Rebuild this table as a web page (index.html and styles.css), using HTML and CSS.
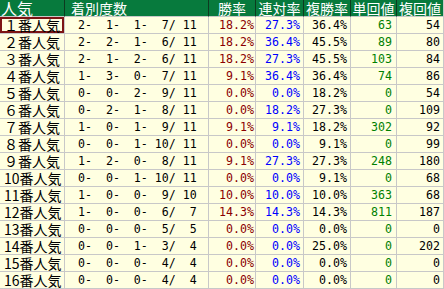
FILE: index.html
```html
<!DOCTYPE html>
<html lang="ja">
<head>
<meta charset="utf-8">
<link rel="stylesheet" href="styles.css">
</head>
<body>
<table class="stats">
  <colgroup>
    <col class="c-label"><col class="c-count"><col class="c-rate1"><col class="c-rate2"><col class="c-rate3"><col class="c-ret1"><col class="c-ret2">
  </colgroup>
  <thead>
    <tr>
      <th class="h-label">人気</th>
      <th class="h-count">着別度数</th>
      <th>勝率</th>
      <th>連対率</th>
      <th>複勝率</th>
      <th>単回値</th>
      <th>複回値</th>
    </tr>
  </thead>
  <tbody>
    <tr><td class="label selected">１番人気</td><td class="count"> 2-  1-  1-  7/ 11</td><td class="win">18.2%</td><td class="ren">27.3%</td><td class="fuku">36.4%</td><td class="tan">63</td><td class="fret">54</td></tr>
    <tr><td class="label">２番人気</td><td class="count"> 2-  2-  1-  6/ 11</td><td class="win">18.2%</td><td class="ren">36.4%</td><td class="fuku">45.5%</td><td class="tan">89</td><td class="fret">80</td></tr>
    <tr><td class="label">３番人気</td><td class="count"> 2-  1-  2-  6/ 11</td><td class="win">18.2%</td><td class="ren">27.3%</td><td class="fuku">45.5%</td><td class="tan">103</td><td class="fret">84</td></tr>
    <tr><td class="label">４番人気</td><td class="count"> 1-  3-  0-  7/ 11</td><td class="win">9.1%</td><td class="ren">36.4%</td><td class="fuku">36.4%</td><td class="tan">74</td><td class="fret">86</td></tr>
    <tr><td class="label">５番人気</td><td class="count"> 0-  0-  2-  9/ 11</td><td class="win">0.0%</td><td class="ren">0.0%</td><td class="fuku">18.2%</td><td class="tan">0</td><td class="fret">54</td></tr>
    <tr><td class="label">６番人気</td><td class="count"> 0-  2-  1-  8/ 11</td><td class="win">0.0%</td><td class="ren">18.2%</td><td class="fuku">27.3%</td><td class="tan">0</td><td class="fret">109</td></tr>
    <tr><td class="label">７番人気</td><td class="count"> 1-  0-  1-  9/ 11</td><td class="win">9.1%</td><td class="ren">9.1%</td><td class="fuku">18.2%</td><td class="tan">302</td><td class="fret">92</td></tr>
    <tr><td class="label">８番人気</td><td class="count"> 0-  0-  1- 10/ 11</td><td class="win">0.0%</td><td class="ren">0.0%</td><td class="fuku">9.1%</td><td class="tan">0</td><td class="fret">99</td></tr>
    <tr><td class="label">９番人気</td><td class="count"> 1-  2-  0-  8/ 11</td><td class="win">9.1%</td><td class="ren">27.3%</td><td class="fuku">27.3%</td><td class="tan">248</td><td class="fret">180</td></tr>
    <tr><td class="label">10番人気</td><td class="count"> 0-  0-  1- 10/ 11</td><td class="win">0.0%</td><td class="ren">0.0%</td><td class="fuku">9.1%</td><td class="tan">0</td><td class="fret">68</td></tr>
    <tr><td class="label">11番人気</td><td class="count"> 1-  0-  0-  9/ 10</td><td class="win">10.0%</td><td class="ren">10.0%</td><td class="fuku">10.0%</td><td class="tan">363</td><td class="fret">68</td></tr>
    <tr><td class="label">12番人気</td><td class="count"> 1-  0-  0-  6/  7</td><td class="win">14.3%</td><td class="ren">14.3%</td><td class="fuku">14.3%</td><td class="tan">811</td><td class="fret">187</td></tr>
    <tr><td class="label">13番人気</td><td class="count"> 0-  0-  0-  5/  5</td><td class="win">0.0%</td><td class="ren">0.0%</td><td class="fuku">0.0%</td><td class="tan">0</td><td class="fret">0</td></tr>
    <tr><td class="label">14番人気</td><td class="count"> 0-  0-  1-  3/  4</td><td class="win">0.0%</td><td class="ren">0.0%</td><td class="fuku">25.0%</td><td class="tan">0</td><td class="fret">202</td></tr>
    <tr><td class="label">15番人気</td><td class="count"> 0-  0-  0-  4/  4</td><td class="win">0.0%</td><td class="ren">0.0%</td><td class="fuku">0.0%</td><td class="tan">0</td><td class="fret">0</td></tr>
    <tr><td class="label">16番人気</td><td class="count"> 0-  0-  0-  4/  4</td><td class="win">0.0%</td><td class="ren">0.0%</td><td class="fuku">0.0%</td><td class="tan">0</td><td class="fret">0</td></tr>
  </tbody>
</table>
</body>
</html>
```

FILE: styles.css
```css
html, body {
  margin: 0;
  padding: 0;
  background: #ffffe1;
}

.stats {
  table-layout: fixed;
  width: 444px;
  border-collapse: separate;
  border-spacing: 0;
  background: #ffffe1;
}

.c-label { width: 65px; }
.c-count { width: 144px; }
.c-rate1 { width: 47px; }
.c-rate2 { width: 48px; }
.c-rate3 { width: 47px; }
.c-ret1 { width: 46px; }
.c-ret2 { width: 47px; }

.stats th {
  height: 16px;
  padding: 0;
  background: #077a3d;
  color: #ffffff;
  font-family: "Noto Sans CJK JP", sans-serif;
  font-size: 14px;
  font-weight: normal;
  line-height: 16px;
  text-align: center;
  border-right: 1px solid #0d3a20;
  border-bottom: 1px solid #c8c8c8;
  white-space: nowrap;
}

.stats th:last-child {
  border-right: 1px solid #c8c8c8;
}

.stats th.h-label {
  text-align: left;
  padding-left: 1px;
  font-size: 16px;
}

.stats th.h-count {
  text-align: left;
  padding-left: 6px;
}

.stats td {
  height: 16px;
  padding: 0;
  border-right: 1px solid #c8c8c8;
  border-bottom: 1px solid #c8c8c8;
  font-family: "DejaVu Sans Mono", monospace;
  font-size: 11.6px;
  line-height: 16px;
  text-align: right;
  padding-right: 3px;
  white-space: pre;
  color: #000000;
}

.stats td.label {
  font-family: "Noto Sans CJK JP", sans-serif;
  font-size: 14px;
  text-align: left;
  padding-left: 4px;
  padding-right: 0;
}

.stats td.selected {
  box-shadow: inset 0 0 0 2px #7d1414;
}

.stats td.count {
  text-align: left;
  padding-left: 6px;
  padding-right: 0;
}

.stats td.win { color: #8b0000; padding-right: 1px; }
.stats td.ren { color: #0000ff; padding-right: 3px; }
.stats td.fuku { color: #000000; padding-right: 3px; }
.stats td.tan { color: #008000; padding-right: 4px; }
.stats td.fret { color: #000000; padding-right: 3px; }
```
